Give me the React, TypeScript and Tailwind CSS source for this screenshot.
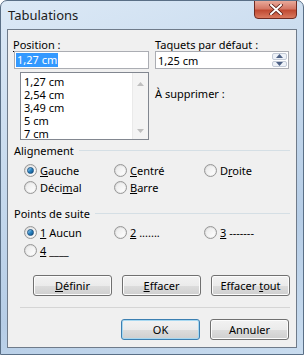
import React from 'react';

const font = { fontFamily: '"Noto Sans", "Open Sans", sans-serif' };

const Radio = ({ checked }: { checked?: boolean }) => (
	<span className="relative inline-block h-[13px] w-[13px] shrink-0 rounded-full border border-[#979797] bg-gradient-to-br from-[#d4d4d4] to-[#f8f8f8]">
		<span className="absolute inset-[1px] rounded-full bg-gradient-to-br from-[#e9e9e9] to-[#ffffff]" />
		{checked && (
			<span className="absolute left-[2px] top-[2px] h-[7px] w-[7px] rounded-full border border-[#1c5180] bg-gradient-to-br from-[#a6dcf7] via-[#2a86c4] to-[#0f4f86]" />
		)}
	</span>
);

const Option = ({ checked, children }: { checked?: boolean; children: React.ReactNode }) => (
	<div className="flex h-[13px] items-center gap-[3px] leading-[13px]">
		<Radio checked={checked} />
		<span>{children}</span>
	</div>
);

const GroupHeader = ({ title }: { title: string }) => (
	<div className="flex h-[13px] items-center gap-[5px] pl-[6px] pr-[6px] leading-[13px]">
		<span>{title}</span>
		<span className="h-px flex-1 bg-[#d5dfe5]" />
	</div>
);

const Button = ({ children, focus }: { children: React.ReactNode; focus?: boolean }) => (
	<button
		className={`flex h-[21px] w-[79px] items-center justify-center rounded-[3px] border leading-[13px] ${
			focus ? 'border-[#3c7fb1] shadow-[inset_0_0_0_1px_#a7d8f1]' : 'border-[#707070] shadow-[inset_0_0_0_1px_#fcfcfc]'
		} bg-[linear-gradient(#f2f2f2_0%,#ebebeb_50%,#dddddd_51%,#cfcfcf_100%)] text-black`}
	>
		<span className="whitespace-pre">{children}</span>
	</button>
);

const Arrow = ({ up, dim }: { up?: boolean; dim?: boolean }) => (
	<svg width="7" height="4" viewBox="0 0 7 4">
		<path d={up ? 'M0 4 L3.5 0 L7 4 Z' : 'M0 0 L3.5 4 L7 0 Z'} fill={dim ? '#bfbfbf' : '#4d6185'} />
	</svg>
);

export default function App() {
	return (
		<div
			className="relative h-[355px] w-[304px] overflow-hidden rounded-t-[7px] border border-[#5a6f86] bg-[linear-gradient(160deg,#dce9f6_0%,#c6d9ed_40%,#b6cde6_70%,#c9dcef_100%)] text-[11px] leading-[13px] text-black"
			style={font}
		>
			<div className="flex h-[28px] items-center pl-[7px] text-[13px] text-[#1c1c1c]">Tabulations</div>
			<button className="absolute right-[6px] top-[-1px] flex h-[19px] w-[43px] items-center justify-center rounded-b-[4px] border border-[#6e2b22] bg-[linear-gradient(#e9a99a_0%,#d47866_45%,#c04a32_55%,#d9795f_100%)]">
				<svg width="14" height="11" viewBox="0 0 14 11">
					<path d="M2 1 L12 10 M12 1 L2 10" stroke="#5a1d14" strokeWidth="3.6" strokeLinecap="square" />
					<path d="M2 1 L12 10 M12 1 L2 10" stroke="#ffffff" strokeWidth="2" strokeLinecap="square" />
				</svg>
			</button>

			<div className="mx-[6px] h-[319px] border border-[#6f7b8a] bg-[#f0f0f0]">
				<div className="flex h-[110px] gap-[6px] pl-[5px] pt-[8px]">
					<div className="flex w-[136px] flex-col">
						<div className="h-[13px]">
							<u className="underline-offset-2">P</u>osition :
						</div>
						<div className="ml-[1px] flex h-[18px] items-center border border-[#abadb3] bg-white pl-[1px]">
							<span className="bg-[#3399ff] px-[1px] leading-[14px] text-white">1,27 cm</span>
						</div>
						<div className="ml-[7px] mt-[3px] flex h-[68px] border border-[#828790] bg-white">
							<div className="flex-1 pl-[3px] pt-[2px]">
								<div>1,27 cm</div>
								<div>2,54 cm</div>
								<div>3,49 cm</div>
								<div>5 cm</div>
								<div>7 cm</div>
							</div>
							<div className="flex w-[16px] flex-col items-center justify-between border-l border-[#eaeaea] bg-[#f4f4f4] pb-[6px] pt-[9px]">
								<Arrow up dim />
								<Arrow dim />
							</div>
						</div>
					</div>
					<div className="flex w-[134px] flex-col">
						<div className="h-[13px]">
							Ta<u className="underline-offset-2">q</u>uets par défaut :
						</div>
						<div className="flex h-[18px] items-center border border-[#abadb3] bg-white pl-[2px]">
							<span className="flex-1">1,25 cm</span>
							<div className="mr-[1px] flex h-[14px] w-[15px] flex-col gap-px">
								<div className="flex flex-1 items-center justify-center rounded-[2px] border border-[#c3cad6] bg-[#eef2f8]">
									<Arrow up />
								</div>
								<div className="flex flex-1 items-center justify-center rounded-[2px] border border-[#c3cad6] bg-[#eef2f8]">
									<Arrow />
								</div>
							</div>
						</div>
						<div className="mt-[18px]">À supprimer :</div>
					</div>
				</div>

				<div className="mt-[4px]">
					<GroupHeader title="Alignement" />
					<div className="grid grid-cols-[90px_90px_80px] gap-y-[4px] pl-[16px] pt-[7px]">
						<Option checked>
							<u>G</u>auche
						</Option>
						<Option>
							<u>C</u>entré
						</Option>
						<Option>
							D<u>r</u>oite
						</Option>
						<Option>
							Déci<u>m</u>al
						</Option>
						<Option>
							<u>B</u>arre
						</Option>
					</div>
				</div>

				<div className="mt-[13px]">
					<GroupHeader title="Points de suite" />
					<div className="grid grid-cols-[90px_90px_80px] gap-y-[5px] pl-[16px] pt-[6px]">
						<Option checked>
							<u>1</u> Aucun
						</Option>
						<Option>
							<u>2</u> .......
						</Option>
						<Option>
							<u>3</u> -------
						</Option>
						<Option>
							<u>4</u> ____
						</Option>
					</div>
				</div>

				<div className="mt-[18px] flex gap-[10px] pl-[25px]">
					<Button>
						<u>D</u>éfinir
					</Button>
					<Button>
						<u>E</u>ffacer
					</Button>
					<Button>
						Effacer <u>t</u>out
					</Button>
				</div>
				<div className="ml-[12px] mr-[6px] mt-[11px] h-px bg-[#d5d5d5]" />
				<div className="mt-[11px] flex justify-end gap-[10px] pr-[7px]">
					<Button focus>OK</Button>
					<Button>Annuler</Button>
				</div>
			</div>
		</div>
	);
}
